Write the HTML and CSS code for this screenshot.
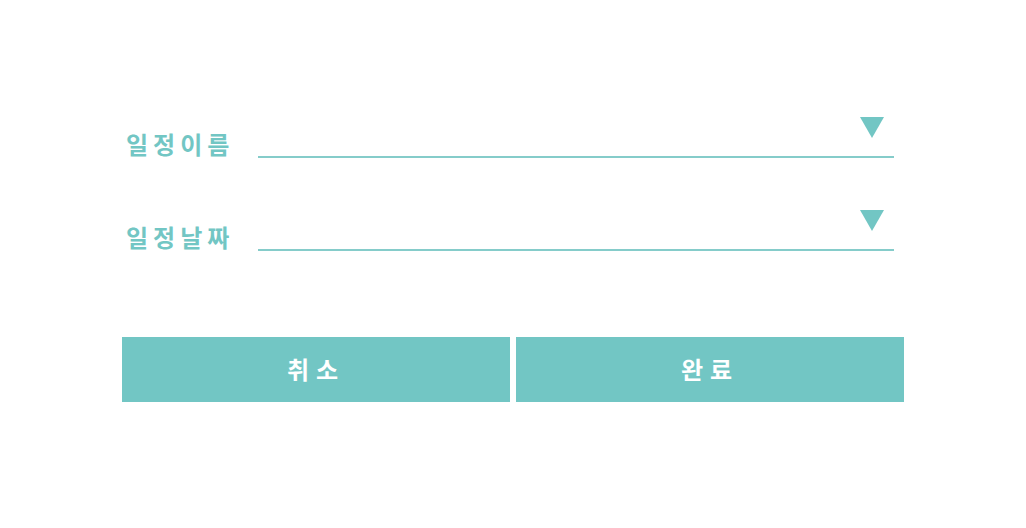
FILE: index.html
```html
<!DOCTYPE html>
<html lang="ko">
<head>
<meta charset="utf-8">
<title>일정</title>
<link rel="stylesheet" href="styles.css">
</head>
<body>
<div class="form">
  <div class="row">
    <div class="label">일정이름</div>
    <div class="field"><span class="caret"></span></div>
  </div>
  <div class="row">
    <div class="label">일정날짜</div>
    <div class="field"><span class="caret"></span></div>
  </div>
  <div class="buttons">
    <button class="btn">취소</button>
    <button class="btn">완료</button>
  </div>
</div>
</body>
</html>
```
FILE: styles.css
```css
html, body {
  margin: 0;
  padding: 0;
  background: #ffffff;
}
body {
  font-family: "Noto Sans CJK KR", "Noto Sans", sans-serif;
}
.form {
  width: 782px;
  margin-left: 122px;
  padding-top: 117px;
  display: flex;
  flex-direction: column;
}
.row {
  display: flex;
  align-items: flex-end;
  margin-bottom: 52px;
}
.row:nth-child(2) {
  margin-bottom: 86px;
}
.label {
  width: 136px;
  padding-left: 4px;
  box-sizing: border-box;
  color: #72c6c4;
  font-size: 24px;
  font-weight: 700;
  letter-spacing: 5px;
  line-height: 24px;
  margin-bottom: 2px;
}
.field {
  width: 636px;
  height: 39px;
  border-bottom: 2px solid #85ccca;
  display: flex;
  justify-content: flex-end;
  align-items: flex-start;
}
.caret {
  width: 0;
  height: 0;
  border-left: 12px solid transparent;
  border-right: 12px solid transparent;
  border-top: 21px solid #72c6c4;
  margin-right: 10px;
}
.buttons {
  display: flex;
  gap: 6px;
}
.btn {
  flex: 1;
  height: 65px;
  border: none;
  margin: 0;
  padding: 0 0 2px 0;
  background: #72c6c4;
  color: #ffffff;
  font-family: "Noto Sans CJK KR", "Noto Sans", sans-serif;
  font-size: 24px;
  font-weight: 700;
  letter-spacing: 7px;
}
```
